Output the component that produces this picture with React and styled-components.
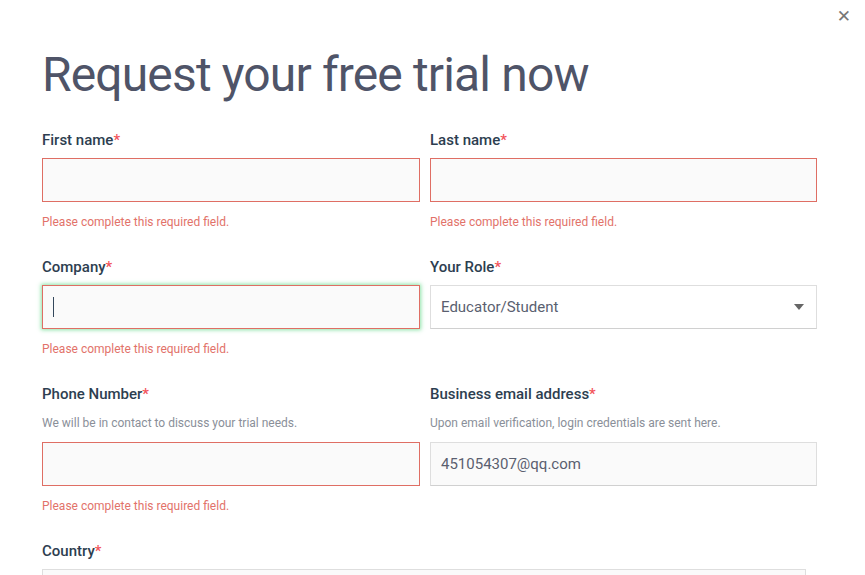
import React from 'react'
import styled, { createGlobalStyle } from 'styled-components'

const GlobalStyle = createGlobalStyle`
  html, body {
    margin: 0;
    padding: 0;
    background: #fff;
  }
  body {
    font-family: "Roboto", "Liberation Sans", sans-serif;
  }
`

const Modal = styled.div`
  position: relative;
  width: 865px;
  height: 575px;
  overflow: hidden;
  background: #fff;
  box-sizing: border-box;
  padding: 44px 48px 0 42px;
`

const Close = styled.button`
  position: absolute;
  top: 8px;
  right: 14px;
  border: none;
  background: none;
  padding: 0;
  color: #777;
  font-size: 17px;
  font-family: "DejaVu Sans", sans-serif;
  line-height: 1;
  cursor: pointer;
`

const Title = styled.h1`
  margin: 0 0 24px;
  font-size: 48px;
  font-weight: 400;
  line-height: 62px;
  color: #4f5468;
  letter-spacing: -0.85px;
`

const Form = styled.form`
  display: grid;
  grid-template-columns: 378px 387px;
  column-gap: 10px;
`

const Field = styled.div`
  display: flex;
  flex-direction: column;
  padding-bottom: 27px;
  grid-column: ${p => (p.$full ? '1 / -1' : 'auto')};
`

const Label = styled.label`
  font-size: 15px;
  font-weight: 500;
  color: #2d3e50;
  line-height: 20px;
  margin-bottom: 8px;

  span {
    color: #f2545b;
  }
`

const Hint = styled.div`
  font-size: 12px;
  color: #8a8f99;
  line-height: 16px;
  margin: 3px 0 11px;
`

const Input = styled.div`
  box-sizing: border-box;
  height: 44px;
  width: ${p => (p.$full ? '764px' : '100%')};
  background: #fafafa;
  border: 1px solid ${p => (p.$error ? '#df6e64' : '#dedede')};
  border-bottom-color: ${p => (p.$error ? '#df6e64' : '#d0d0d0')};
  box-shadow: ${p => (p.$focus ? '0 0 4px 1px rgba(90, 215, 130, 0.7)' : 'none')};
  display: flex;
  align-items: center;
  padding: 0 10px;
  font-size: 15px;
  color: #5a5f70;
`

const Caret = styled.div`
  width: 1px;
  height: 20px;
  background: #33475b;
`

const Select = styled(Input)`
  background: #fff;
  justify-content: space-between;
`

const Arrow = styled.div`
  width: 0;
  height: 0;
  border-left: 5px solid transparent;
  border-right: 5px solid transparent;
  border-top: 6px solid #666;
  margin-right: 2px;
`

const Error = styled.div`
  font-size: 12px;
  color: #e2726a;
  margin-top: 12px;
  line-height: 16px;
`

const Req = ({ children }) => (
  <Label>
    {children}
    <span>*</span>
  </Label>
)

const ERR = 'Please complete this required field.'

export default function App() {
  return (
    <>
      <GlobalStyle />
      <Modal>
        <Close aria-label="close">✕</Close>
        <Title>Request your free trial now</Title>
        <Form>
          <Field>
            <Req>First name</Req>
            <Input $error />
            <Error>{ERR}</Error>
          </Field>
          <Field>
            <Req>Last name</Req>
            <Input $error />
            <Error>{ERR}</Error>
          </Field>
          <Field>
            <Req>Company</Req>
            <Input $error $focus>
              <Caret />
            </Input>
            <Error>{ERR}</Error>
          </Field>
          <Field>
            <Req>Your Role</Req>
            <Select>
              Educator/Student
              <Arrow />
            </Select>
          </Field>
          <Field>
            <Req>Phone Number</Req>
            <Hint>We will be in contact to discuss your trial needs.</Hint>
            <Input $error />
            <Error>{ERR}</Error>
          </Field>
          <Field>
            <Req>Business email address</Req>
            <Hint>Upon email verification, login credentials are sent here.</Hint>
            <Input>451054307@qq.com</Input>
          </Field>
          <Field $full>
            <Req>Country</Req>
            <Input $full />
          </Field>
        </Form>
      </Modal>
    </>
  )
}
